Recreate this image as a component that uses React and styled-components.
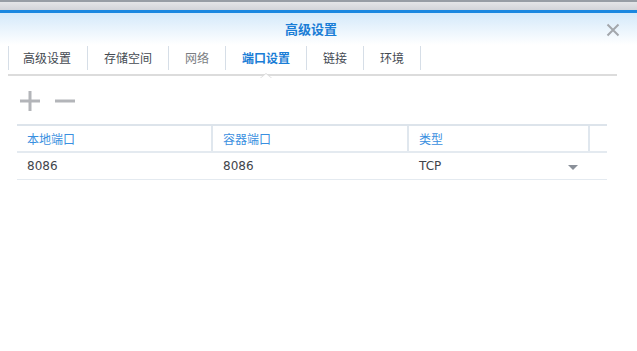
import React from "react";
import styled, { createGlobalStyle } from "styled-components";

const Global = createGlobalStyle`
  html, body { margin: 0; padding: 0; background: #ffffff; }
  body { font-family: "DejaVu Sans", "Noto Sans CJK SC", sans-serif; }
  * { box-sizing: border-box; }
`;

const Window = styled.div`
  width: 637px;
  height: 351px;
  background: #fff;
  overflow: hidden;
`;

const TopStrip = styled.div`
  height: 10px;
  border-top: 2px solid #979da5;
  background: linear-gradient(#e4e5e8, #d2d4d9);
`;

const Header = styled.div`
  position: relative;
  height: 35px;
  border-top: 3px solid #1a87e0;
  background: linear-gradient(#d4e9fa, #ffffff);
  display: flex;
  align-items: center;
  justify-content: center;
`;

const Title = styled.div`
  font-family: "Noto Sans CJK SC", sans-serif;
  font-size: 13px;
  font-weight: 700;
  color: #1a7dd6;
  margin-right: 15px;
  margin-top: -2px;
`;

const Close = styled.button`
  position: absolute;
  right: 16px;
  top: 9px;
  width: 16px;
  height: 16px;
  padding: 0;
  border: 0;
  background: transparent;
  display: flex;
  align-items: center;
  justify-content: center;
`;

const TabBar = styled.div`
  display: flex;
  margin: 0 20px 0 8px;
  height: 31px;
  border-bottom: 2px solid #dcdcdc;
  padding-top: 1px;
`;

const Tab = styled.div`
  position: relative;
  height: 24px;
  padding: 0 16px 2px ${(p) => (p.$first ? "14px" : "16px")};
  display: flex;
  align-items: center;
  border-right: 1px solid #d6dee7;
  border-left: ${(p) => (p.$first ? "1px solid #d6dee7" : "0")};
  font-family: "Noto Sans CJK SC", sans-serif;
  font-size: 12px;
  color: ${(p) => (p.$active ? "#1a7dd6" : p.$muted ? "#7a7d82" : "#444a52")};
  font-weight: ${(p) => (p.$active ? 700 : 400)};
`;

const Pointer = styled.span`
  position: absolute;
  left: 50%;
  bottom: -8px;
  width: 0;
  height: 0;
  margin-left: -6px;
  border-left: 6px solid transparent;
  border-right: 6px solid transparent;
  border-bottom: 5px solid #dcdcdc;
  &::after {
    content: "";
    position: absolute;
    left: -5px;
    top: 1px;
    border-left: 5px solid transparent;
    border-right: 5px solid transparent;
    border-bottom: 4px solid #ffffff;
  }
`;

const Toolbar = styled.div`
  display: flex;
  align-items: center;
  gap: 13px;
  height: 26px;
  margin: 12px 0 0 19px;
`;

const ToolButton = styled.button`
  width: 22px;
  height: 22px;
  padding: 0;
  border: 0;
  background: transparent;
  display: flex;
  align-items: center;
  justify-content: center;
`;

const Table = styled.div`
  margin: 10px 0 0 17px;
  width: 590px;
  border-top: 2px solid #dde4eb;
`;

const HeadRow = styled.div`
  display: grid;
  grid-template-columns: 196px 196px 181px 17px;
  height: 27px;
  border-bottom: 2px solid #e4eaf0;
`;

const HeadCell = styled.div`
  display: flex;
  align-items: center;
  padding-left: 10px;
  font-family: "Noto Sans CJK SC", sans-serif;
  font-size: 12px;
  color: #3a8fe0;
  border-right: ${(p) => (p.$last ? "0" : "2px solid #e0e7ee")};
`;

const Row = styled.div`
  display: grid;
  grid-template-columns: 196px 196px 181px 17px;
  height: 27px;
  border-bottom: 1px solid #e4eaf0;
`;

const Cell = styled.div`
  display: flex;
  align-items: center;
  justify-content: space-between;
  padding-left: 10px;
  padding-right: ${(p) => (p.$select ? "12px" : "0")};
  font-size: 12px;
  color: #3f444b;
`;

const Caret = styled.span`
  width: 0;
  height: 0;
  border-left: 5px solid transparent;
  border-right: 5px solid transparent;
  border-top: 5px solid #8a9099;
  margin-top: 2px;
`;

const tabs = ["高级设置", "存储空间", "网络", "端口设置", "链接", "环境"];

export default function App() {
  return (
    <Window>
      <Global />
      <TopStrip />
      <Header>
        <Title>高级设置</Title>
        <Close aria-label="close">
          <svg width="14" height="14" viewBox="0 0 14 14">
            <path d="M1.5 1.5 L12.5 12.5 M12.5 1.5 L1.5 12.5" stroke="#a3a7ac" strokeWidth="2" />
          </svg>
        </Close>
      </Header>
      <TabBar>
        {tabs.map((t, i) => (
          <Tab key={t} $first={i === 0} $active={i === 3} $muted={i === 2}>
            {t}
            {i === 3 && <Pointer />}
          </Tab>
        ))}
      </TabBar>
      <Toolbar>
        <ToolButton aria-label="add">
          <svg width="22" height="22" viewBox="0 0 22 22">
            <path d="M11 1 V21 M1 11 H21" stroke="#b3b5b9" strokeWidth="3" />
          </svg>
        </ToolButton>
        <ToolButton aria-label="remove">
          <svg width="22" height="22" viewBox="0 0 22 22">
            <path d="M1 11 H21" stroke="#b3b5b9" strokeWidth="3" />
          </svg>
        </ToolButton>
      </Toolbar>
      <Table>
        <HeadRow>
          <HeadCell>本地端口</HeadCell>
          <HeadCell>容器端口</HeadCell>
          <HeadCell>类型</HeadCell>
          <HeadCell $last />
        </HeadRow>
        <Row>
          <Cell>8086</Cell>
          <Cell>8086</Cell>
          <Cell $select>
            TCP
            <Caret />
          </Cell>
          <Cell />
        </Row>
      </Table>
    </Window>
  );
}
